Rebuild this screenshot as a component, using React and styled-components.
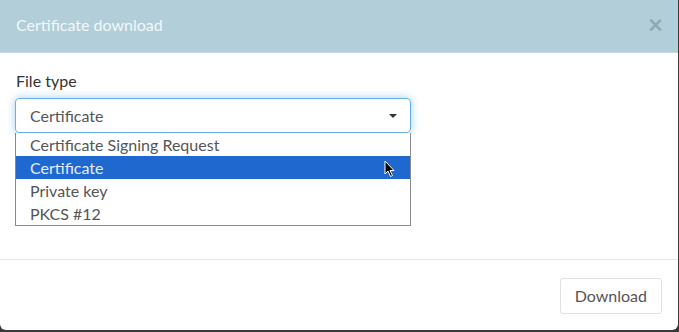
import React from "react";
import styled, { createGlobalStyle } from "styled-components";

const Global = createGlobalStyle`
  html, body { margin: 0; padding: 0; background: #3a3a3a; }
  body { width: 679px; height: 332px; overflow: hidden; font-family: "Lato", "Liberation Sans", sans-serif; }
`;

const Modal = styled.div`
  width: 678px;
  height: 330px;
  background: #fff;
  border-radius: 0 0 6px 6px;
  display: flex;
  flex-direction: column;
  overflow: hidden;
`;

const Header = styled.div`
  height: 53px;
  flex: none;
  background: #b1ced9;
  display: flex;
  align-items: center;
  justify-content: space-between;
  padding: 0 16px;
  box-sizing: border-box;
  border-bottom: 1px solid #c5dbe3;
`;

const Title = styled.div`
  color: #f3f8fa;
  font-size: 16px;
  padding-bottom: 4px;
`;

const Close = styled.div`
  color: #8fa9b3;
  font-size: 26px;
  font-weight: bold;
  line-height: 1;
  margin-right: -1px;
  padding-bottom: 4px;
`;

const Body = styled.div`
  flex: 1;
  padding: 18px 15px 0;
  border-bottom: 1px solid #e8e8e8;
`;

const Label = styled.div`
  color: #333;
  font-size: 16px;
  margin-bottom: 8px;
  padding-left: 1px;
`;

const SelectWrap = styled.div`
  position: relative;
  width: 396px;
`;

const Select = styled.div`
  height: 35px;
  box-sizing: border-box;
  border: 1px solid #66afe9;
  border-radius: 4px;
  box-shadow: 0 0 8px rgba(102, 175, 233, 0.6);
  display: flex;
  align-items: center;
  justify-content: space-between;
  padding: 0 13px 0 14px;
  color: #555;
  font-size: 16px;
`;

const Caret = styled.span`
  width: 0;
  height: 0;
  border-left: 4px solid transparent;
  border-right: 4px solid transparent;
  border-top: 4px solid #333;
  margin-top: 1px;
`;

const List = styled.div`
  position: absolute;
  top: 35px;
  left: 0;
  width: 396px;
  box-sizing: border-box;
  border: 1px solid #8a8a8a;
  border-top: none;
  background: #fff;
`;

const Item = styled.div`
  height: 23px;
  line-height: 23px;
  padding-left: 14px;
  font-size: 16px;
  color: ${(p) => (p.$active ? "#e4eefb" : "#555")};
  background: ${(p) => (p.$active ? "#1f68cf" : "transparent")};
  position: relative;
`;

const Cursor = styled.svg`
  position: absolute;
  right: 14px;
  top: 4px;
`;

const Footer = styled.div`
  height: 70px;
  flex: none;
  box-sizing: border-box;
  display: flex;
  align-items: center;
  justify-content: flex-end;
  padding: 1px 16px 0;
`;

const Button = styled.button`
  height: 36px;
  padding: 0 14px;
  background: #fff;
  border: 1px solid #e0e0e0;
  border-radius: 3px;
  color: #555;
  font-family: "Lato", "Liberation Sans", sans-serif;
  font-size: 16px;
`;

export default function App() {
  const items = ["Certificate Signing Request", "Certificate", "Private key", "PKCS #12"];
  return (
    <>
      <Global />
      <Modal>
        <Header>
          <Title>Certificate download</Title>
          <Close>×</Close>
        </Header>
        <Body>
          <Label>File type</Label>
          <SelectWrap>
            <Select>
              <span>Certificate</span>
              <Caret />
            </Select>
            <List>
              {items.map((it, i) => (
                <Item key={it} $active={i === 1}>
                  {it}
                  {i === 1 && (
                    <Cursor width="12" height="18" viewBox="0 0 12 18">
                      <path d="M1 1 L1 14 L4 11 L6.5 16.5 L8.5 15.5 L6 10.5 L10 10.5 Z" fill="#000" stroke="#fff" strokeWidth="1" />
                    </Cursor>
                  )}
                </Item>
              ))}
            </List>
          </SelectWrap>
        </Body>
        <Footer>
          <Button>Download</Button>
        </Footer>
      </Modal>
    </>
  );
}
